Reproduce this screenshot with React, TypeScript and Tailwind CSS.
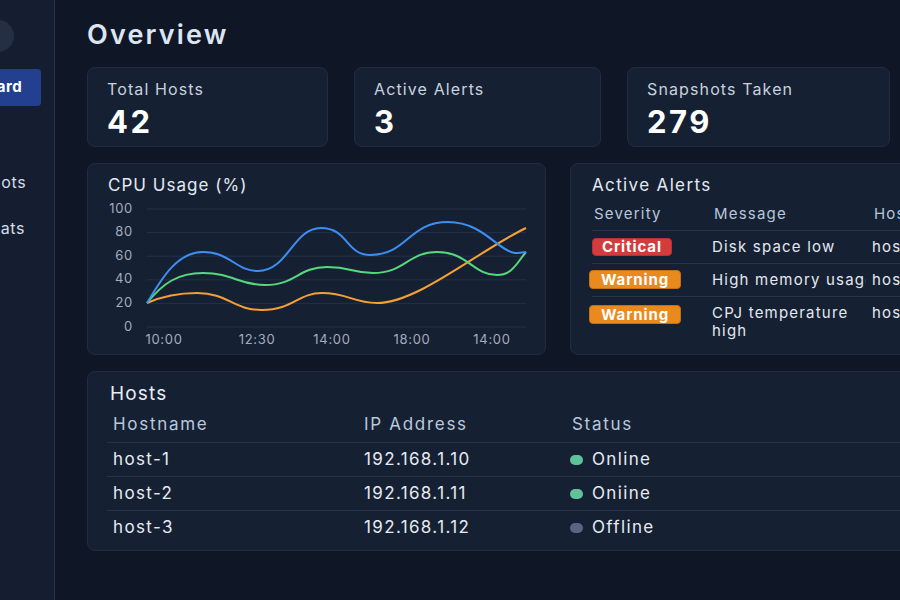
import React from 'react';

const font = "font-['Inter','Noto_Sans',sans-serif]";

const navItems = ['Hosts', 'Snapshots', 'Host Stats'];

const stats = [
  { label: 'Total Hosts', value: '42' },
  { label: 'Active Alerts', value: '3' },
  { label: 'Snapshots Taken', value: '279' },
];

const alerts = [
  { severity: 'Critical', message: 'Disk space low', host: 'host-1' },
  { severity: 'Warning', message: 'High memory usage', host: 'host-2' },
  { severity: 'Warning', message: 'CPJ temperature high', host: 'host-3' },
];

const hosts = [
  { name: 'host-1', ip: '192.168.1.10', status: 'Online' },
  { name: 'host-2', ip: '192.168.1.11', status: 'Oniine' },
  { name: 'host-3', ip: '192.168.1.12', status: 'Offline' },
];

const yTicks = [100, 80, 60, 40, 20, 0];
const xTicks = [
  { x: 56, label: '10:00' },
  { x: 149, label: '12:30' },
  { x: 224, label: '14:00' },
  { x: 304, label: '18:00' },
  { x: 384, label: '14:00' },
];

const CpuChart = () => {
  const yFor = (v: number) => 126 - v * 1.18;
  return (
    <svg width="422" height="148" className="mt-[6px] block">
      {yTicks.map((v) => (
        <g key={v}>
          <line x1="39" x2="418" y1={yFor(v)} y2={yFor(v)} stroke="#243048" strokeWidth="1" />
          <text
            x="25"
            y={yFor(v)}
            textAnchor="end"
            dominantBaseline="middle"
            fill="#a3adbd"
            fontSize="13"
            letterSpacing="0.7"
            fontFamily="Inter, sans-serif"
          >
            {v}
          </text>
        </g>
      ))}
      {xTicks.map((t, i) => (
        <text
          key={i}
          x={t.x}
          y="139"
          textAnchor="middle"
          dominantBaseline="middle"
          fill="#a3adbd"
          fontSize="13"
          letterSpacing="0.7"
          fontFamily="Inter, sans-serif"
        >
          {t.label}
        </text>
      ))}
      <path
        d="M39,102 C55,95 70,92 89,92 C120,92 125,109 154,109 C185,109 190,92 214,92 C240,92 245,102 269,102 C310,102 370,50 418,27"
        fill="none"
        stroke="#f5a032"
        strokeWidth="2"
      />
      <path
        d="M39,102 C55,82 70,72 95,72 C125,72 130,84 157,84 C188,84 190,66 219,66 C243,66 245,72 265,72 C297,72 300,51 329,51 C360,51 365,74 389,74 C405,74 410,60 418,51"
        fill="none"
        stroke="#55d97c"
        strokeWidth="2"
      />
      <path
        d="M39,102 C55,75 70,51 95,51 C122,51 128,70 150,70 C180,70 185,27 213,27 C240,27 238,54 262,54 C300,54 300,21 340,21 C375,21 390,50 407,52 C412,52 415,51 418,51"
        fill="none"
        stroke="#3d8ef2"
        strokeWidth="2"
      />
    </svg>
  );
};

const Badge = ({ severity }: { severity: string }) =>
  severity === 'Critical' ? (
    <span className="inline-block rounded-[4px] border border-[#b53232] bg-[#d23c3c] px-[9px] text-[15px] font-bold leading-[16px] tracking-[0.06em] text-white">
      Critical
    </span>
  ) : (
    <span className="-ml-[3px] inline-block rounded-[4px] border border-[#c56f16] bg-[#e98a1f] px-[11px] text-[15px] font-bold leading-[17px] tracking-[0.06em] text-white">
      Warning
    </span>
  );

export default function App() {
  return (
    <div className={`flex h-[600px] w-[900px] overflow-hidden bg-[#0f1727] ${font}`}>
      <aside className="w-[55px] shrink-0 overflow-hidden border-r border-[#253049] bg-[#151e31]">
        <div className="ml-[-150px] w-[204px] pt-5">
          <div className="ml-[132px] h-8 w-8 rounded-full bg-[#252f43]" />
          <div className="ml-[72px] mt-[17px] flex h-[37px] w-[119px] items-center rounded-[4px] bg-[#22408f] pl-[15px] text-[15px] font-bold tracking-[0.04em] text-white">
            Dashboard
          </div>
          <div className="mt-[7px]">
            {navItems.map((item) => (
              <div
                key={item}
                className="flex h-[46px] items-center pl-[91px] text-[16px] tracking-[0.04em] text-[#d5dce7]"
              >
                {item}
              </div>
            ))}
          </div>
        </div>
      </aside>

      <main className="min-w-0 flex-1 overflow-hidden pl-8 pt-[19px]">
        <h1 className="text-[27px] font-semibold leading-[32px] tracking-[0.08em] text-[#dce5f1]">Overview</h1>

        <div className="mt-4 grid grid-cols-[241px_247px_263px] gap-[26px]">
          {stats.map((s) => (
            <div key={s.label} className="h-[80px] rounded-lg border border-[#222c41] bg-[#162033] pl-[19px] pt-[11px]">
              <p className="text-[16px] leading-[20px] tracking-[0.07em] text-[#c8d1de]">{s.label}</p>
              <p className="mt-[7px] text-[31px] font-bold leading-[32px] tracking-[0.08em] text-white">{s.value}</p>
            </div>
          ))}
        </div>

        <div className="mt-4 grid grid-cols-[459px_360px] gap-[24px]">
          <div className="h-[192px] rounded-lg border border-[#222c41] bg-[#162033] pl-[20px] pt-[11px]">
            <p className="text-[17px] leading-[20px] tracking-[0.06em] text-[#e3e9f2]">CPU Usage (%)</p>
            <CpuChart />
          </div>

          <div className="h-[192px] overflow-hidden rounded-lg border border-[#222c41] bg-[#162033] pl-[21px] pt-[11px]">
            <p className="text-[17px] leading-[20px] tracking-[0.08em] text-[#e3e9f2]">Active Alerts</p>
            <div className="mt-1 grid h-[31px] grid-cols-[120px_160px_1fr] items-center pl-[2px] text-[15px] tracking-[0.08em] text-[#b7c6da]">
              <span>Severity</span>
              <span>Message</span>
              <span>Host</span>
            </div>
            {alerts.map((a, i) => (
              <div
                key={i}
                className={`grid grid-cols-[120px_160px_1fr] border-t border-[#27324a] text-[15px] tracking-[0.08em] text-[#e3e8ef] ${
                  i === 2 ? 'items-start pt-[7px]' : 'h-[33px] items-center'
                }`}
              >
                <div>
                  <Badge severity={a.severity} />
                </div>
                <span className={i === 2 ? 'pr-3 leading-[18px]' : 'mr-[6px] overflow-hidden whitespace-nowrap'}>
                  {a.message}
                </span>
                <span className={i === 2 ? 'leading-[18px]' : ''}>{a.host}</span>
              </div>
            ))}
          </div>
        </div>

        <div className="mt-4 h-[180px] w-[850px] rounded-lg border border-[#222c41] bg-[#162033] pl-[19px] pt-[10px]">
          <p className="pl-[3px] text-[19px] leading-[24px] tracking-[0.06em] text-[#e8edf4]">Hosts</p>
          <div className="mt-[2px] grid h-[34px] grid-cols-[251px_208px_1fr] items-center text-[17px] tracking-[0.1em] text-[#b9c8dc]">
            <span className="pl-[6px]">Hostname</span>
            <span className="pl-[6px]">IP Address</span>
            <span className="pl-[6px]">Status</span>
          </div>
          {hosts.map((h) => (
            <div
              key={h.name}
              className="grid h-[34px] grid-cols-[251px_208px_1fr] items-center border-t border-[#26314a] text-[17px] tracking-[0.08em] text-[#e6ebf2]"
            >
              <span className="pl-[6px]">{h.name}</span>
              <span className="pl-[6px]">{h.ip}</span>
              <span className="flex items-center gap-[9px] pl-[4px]">
                <span
                  className={`h-[10px] w-[13px] rounded-full ${
                    h.status === 'Offline' ? 'bg-[#5b6482]' : 'bg-[#5fc39a]'
                  }`}
                />
                {h.status}
              </span>
            </div>
          ))}
        </div>
      </main>
    </div>
  );
}
